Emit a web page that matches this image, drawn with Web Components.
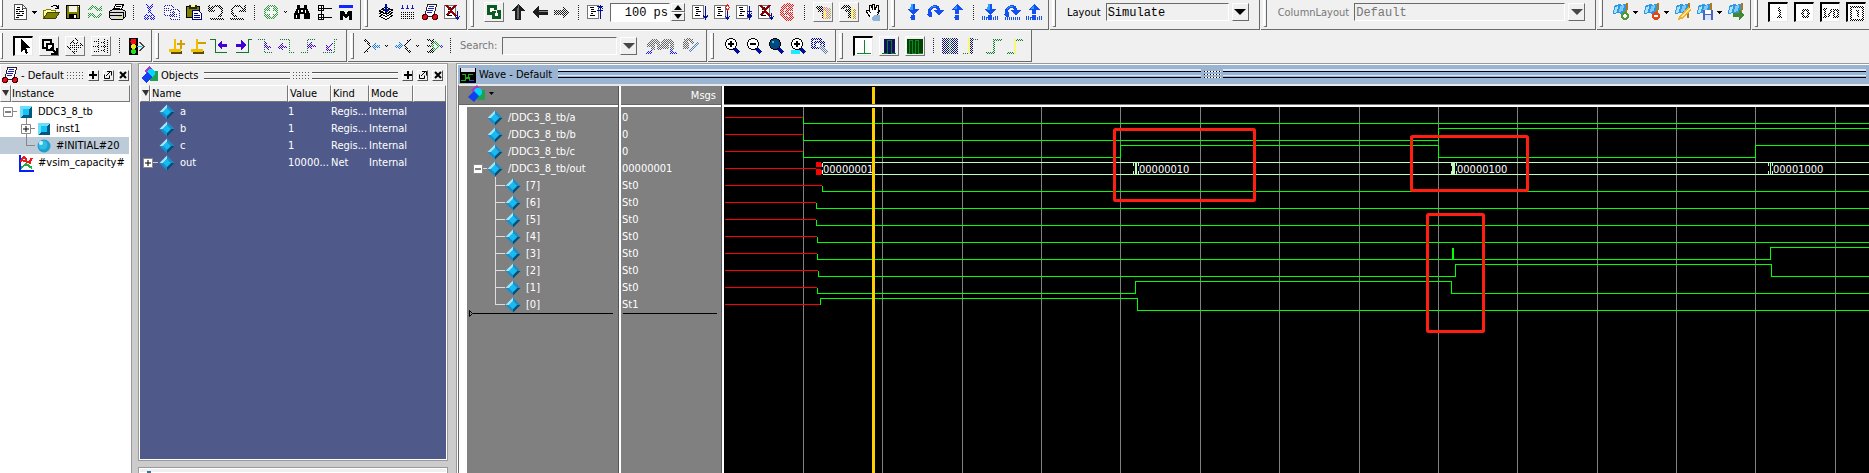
<!DOCTYPE html>
<html lang="en">
<head>
<meta charset="utf-8">
<title>Wave - Default</title>
<style>
html{height:100%}
body{margin:0;min-height:100%;display:flex;flex-direction:column;background:#f0f0f0;color:#000;font:11px/17px "DejaVu Sans Condensed","Noto Sans",sans-serif;overflow:hidden}
</style>
</head>
<body>
<sim-app></sim-app>
<script>
const R=(x,y,w,h,f)=>`<rect x="${x}" y="${y}" width="${w}" height="${h}" fill="${f}"/>`;
const P=(d,s='#000',w=1,f='none')=>`<path d="${d}" stroke="${s}" stroke-width="${w}" fill="${f}"/>`;
const F=(d,f='#000')=>`<path d="${d}" fill="${f}"/>`;
const NAVY='#00109a';
const page=R(1,2,12,14,'#777')+R(2,3,10,12,'#fff')+P('M4 4.5h4M5 6.5h3M5 8.5h5M5 10.5h2M4 12.5h5','#000');
const cross=P('M3 2L13 13M13 2L4 12','#8b0000',2);
const glass=P('M11 11L16 16',NAVY,3)+'<circle cx="8" cy="7" r="5.5" fill="#fff" stroke="#000"/>';
const blueDown=F('M7 1h4v5h4l-6 6-6-6h4z','#1450f0')+F('M7 1h2v6h-3z','#30a0ff')+F('M9 12a2.500 2.500 0 1 1 0 5 2.500 2.500 0 0 1 0-5','#1450f0');
const blueUp=F('M7 11h4V7h4L9 1 3 7h4z','#1450f0')+F('M9 2L5 6h4z','#30a0ff')+F('M9 12a2.500 2.500 0 1 1 0 5 2.500 2.500 0 0 1 0-5','#1450f0');
const blueOver=P('M3 9C5 2 12 2 13 8','#1450f0',3)+F('M7 7h11l-5 6z','#1450f0')+P('M4 6C6 3 8 3 10 4','#30a0ff')+F('M4 9a2.500 2.500 0 1 1 0 5 2.500 2.500 0 0 1 0-5','#1450f0');
const barDots=P('M1.500 13v4M3.500 13v4M5.500 14v3M12.500 14v3M14.500 13v4M16.500 13v4','#1450f0');
const flag=F('M2 3l5-2 3 1 5-2-1 10-5 1-3-1-5 1z','#2f98e0')+F('M3 4l3-1-1 6-3 1z','#a8e4ff')+F('M8 3l4-1-1 6-4 1z','#7cc8f8')+P('M15 0l-1 15','#b07818',2);
const wheels='<circle cx="4" cy="14" r="2.5" fill="#e01020" stroke="#500"/><circle cx="14" cy="14" r="2.5" fill="#e01020" stroke="#500"/>';
const ICONS={
caret:F('M-1 8h5l-2.5 3z'),
new:P('M3.500 1.500h8l4 4v11h-12z','#555',1,'#fff')+P('M11.500 1.500v4h4','#555')+P('M6 4.500h3M5 6.500h4M11 6.500h1M5 8.500h2M8 8.500h5M5 10.500h4M11 10.500h2M6 12.500h6M5 14.500h3','#000'),
open:P('M1.500 14.500v-7h2l1-1h4l1 1h4v2','#808000',1,'#ffff9a')+P('M1.500 15.500l4-6h12l-4 6z','#404000',1,'#808000')+P('M9 3.500h1l2-1h2l2 2M16.500 2v4M13 5.500h4'),
save:R(2,2,14,14,'#000')+R(3,3,12,12,'#808000')+R(5,3,8,6,'#f4f4e8')+R(5,11,8,5,'#000')+R(10,12,2,3,'#fff')+R(14,3,1,1,'#fff'),
refresh:P('M3 7C5 3 9 3 12 6M15 10C13 15 9 15 6 12','#2a9a3c',3)+F('M10 8h6V2zM8 10H2v6z','#2a9a3c'),
print:P('M5.500 7l2-5.500h8L13 7','#000',1,'#fff')+P('M1.500 8.500l3-2h10l3 2v5l-3 3h-11l-2-2z','#000',1,'#d8d8d8')+P('M2 9.500h13v6M2 12.500h12M8 3.500h5M7 5.500h5')+R(10,13,3,1,'#dddd00'),
cut:P('M6 1l4 9M12 1L7 10M6 11l-2 2v3h3v-4M10 11l3 2v3h-3l-1-4','#1010ff',2),
copy:P('M1.500 2.500h7l2 2v8h-9zM7.500 6.500h7l2 2v8h-9z','#2020a0',1,'#fff')+P('M3 5.500h4M3 7.500h4M9 9.500h4M9 11.500h5M9 13.500h5','#2020a0'),
paste:P('M1.500 3.500h13v11h-13z','#000',1,'#808000')+R(4,2,8,4,'#222')+R(6,2,4,2,'#ffff60')+P('M7.500 7.500h6l3 3v6h-9z','#00008b',1,'#fff')+P('M9 10.500h4M9 12.500h6M9 14.500h6','#00008b'),
undo:P('M2 2v6h6M3 7C7 1 15 2 15 8s-4 5-5 6M3 15.500h14','#000',2),
redo:P('M16 2v6h-6M15 7C11 1 3 2 3 8s4 5 5 6M1 15.500h14','#000',2),
add:'<circle cx="9" cy="9" r="7.500" fill="#2f9a3f"/>'+P('M9 4v10M4 9h10','#fff',3),
find:F('M4 2h3v3h4V2h3v3l3 6v5h-6v-5H7v5H1v-5l3-6z')+R(5,7,1,3,'#fff')+R(12,7,1,3,'#fff')+R(3,12,1,3,'#fff')+R(8,7,2,2,'#fff'),
boxes:P('M3.500 2.500h5v5h-5zM3.500 11.500h5v5h-5z','#000',1,'#fff')+P('M4 5h4M6 3v4M4 14h4M6 12v4M9 5.500h8M9 14.500h8M6.500 8v3'),
em:R(2,2,14,3,'#1226ff')+F('M3 8h4l2 4 2-4h4v9h-3v-5l-3 4-3-4v5H3z'),
layers:P('M2.500 13.500l6-4 7 3-6 4zM2.500 10.500l6-4 7 3-6 4zM2.500 8l6-4 7 3-6 4z','#000',1,'#fff')+P('M9 1v7',NAVY,2)+F('M5 6h8L9 10z',NAVY),
grid:P('M3.500 2v4M8.500 2v4M13.500 2v4M2 5.500h3M7 5.500h3M12 5.500h3','#1a1ac0')+[9,11,13,15].map(y=>`<path d="M2 ${y}.500h14" stroke="#000" stroke-dasharray="1 1"/>`).join(''),
script:P('M6.500 1.500h9l-1 5-2 7h-9l2-7z','#222',1,'#fff')+P('M8 3.500h5M7 5.500h6M6 7.500h6M6 9.500h5','#2020c0')+wheels,
kill:page+cross+P('M14.500 8v7M12 13l2.500 3 2.500-3',NAVY),
link:P('M3.500 3.500h7v7h-7z','#0b5a22',3,'#fff')+P('M8.500 8.500h6v6h-6z','#0b5a22',3,'#fff')+P('M6 7h5v4','#fff'),
up:F('M9 1l7 7h-4v9H6V8H2z','#1d1d1d')+F('M9 2l1 1v13H8V8z','#666'),
left:F('M1 9l7-6v4h9v5H8v3z','#1d1d1d')+R(8,8,9,1,'#888'),
right:F('M17 9l-7-6v4H1v5h9v3z','#1d1d1d'),
restart:page+P('M11 3.500h6M11 7.500h6M14.500 3v13M12 6l2.500-3 2.500 3',NAVY),
run:page+P('M14.500 3v12M12 12l2.500 4 2.500-4',NAVY),
runc:page+P('M14.500 8v8M12 13l2.500 3 2.500-3',NAVY)+P('M14.500 2l2 2.500-2 2.500-2-2.500z','#e02020',1,'#fff'),
runall:page+P('M14.500 3v12M12 8.500h5M12 12l2.500 4 2.500-4M12 10l2.500 3 2.500-3',NAVY),
stop:page+cross+P('M14.500 10v5M12 13l2.500 3 2.500-3',NAVY),
brk:P('M14 4C10 0 3 3 3 9s7 9 11 5M14 7c-7-4-9 6 0 4','#f01818',4),
prof:P('M2 4h5l3 3v8M4 7h5v8','#000',3)+R(9,4,5,12,'#f08080')+R(10,8,2,7,'#ffff00')+R(14,5,3,11,'#b0a060'),
prof2:P('M2 6c2-4 8-4 9 0v9M5 7h4v8','#000',3)+R(11,4,2,12,'#ffff00')+R(13,6,3,10,'#c09040'),
hand:F('M3 8l2-1 2 3-2-7 2-1 2 5V1h2v6l2-5 1 1-1 6 2-2 1 1-4 8H8z','#fff')+P('M6 14L2 8l2-1 2 2-1-6 2-1 2 5-1-6 2 0 1 6 2-5 2 1-1 6 2-2-3 6-3 3')+P('M8 15l3-3h4v5H9z','#8fb4d8',1,'#8fb4d8'),
bDown:blueDown,bOver:blueOver,bUp:blueUp,
bDown2:blueDown+barDots,bOver2:blueOver+P('M2.500 14v3M4.500 14v3M6.500 14v3M8.500 14v3M10.500 14v3M12.500 14v3M14.500 14v3M16.500 14v3','#1450f0'),bUp2:blueUp+barDots,
fAdd:flag+'<circle cx="13" cy="13" r="4" fill="#4f9a30"/>'+P('M13 11v4M11 13h4','#fff',2),
fDel:flag+'<circle cx="13" cy="13" r="4" fill="#e04818"/>'+P('M11 13h4','#fff',2),
fEdit:flag+F('M5 13L14 4l3 3-9 9-4 1z','#f0b030')+F('M7 13l8-8 1 1-8 9z','#ffe890'),
fSave:flag+R(7,7,10,10,'#4868c0')+R(9,7,6,4,'#fff')+R(9,12,6,5,'#d8e4ff'),
fGo:flag+F('M6 10h6V7l6 5-6 5v-3H6z','#3f8a30'),
ptr:F('M6 2v13l3-3 2 5 2-1-2-5h4z'),
zone:P('M3 3h8v8H3z','#000',2)+P('M7 7h6v6H7z','#000',2,'#fff')+P('M11 11l5 5M16.500 11v5.500H11','#000',2),
pan:P('M9 1l3 4h-2v3h4V6l3 3-3 3v-2h-4v4h2l-3 3-3-3h2v-4H4v2L1 9l3-3v2h4V5H6z','#000',1,'#fff'),
twoE:P('M1 4.500h5M1 9.500h5M1 14.500h5M6.500 2v14M12.500 2v14M8 5.500h4M8 9.500h7M8 13.500h4M15.500 2v14','#000',1),
light:R(2,1,9,17,'#000')+'<circle cx="6.5" cy="4.500" r="3" fill="#f01010"/><circle cx="6.5" cy="9.500" r="2.500" fill="#f0e020"/><circle cx="6.5" cy="14.500" r="2.500" fill="#20e020"/>'+P('M12 5.500h1l4 4-4 4h-1','#444')+R(10,9,5,1,'#00d0ff'),
cAdd:R(3,14,11,3,'#604800')+R(1,12,12,3,'#f0c000')+R(6,2,2,11,'#f0c000')+P('M9 7h8M13 3v9','#d0a000',2),
cDel:R(3,14,11,3,'#604800')+R(1,12,12,3,'#f0c000')+R(6,2,2,11,'#f0c000')+P('M8 6h8','#d0a000',2),
ePrev:P('M-2 2.500h5v13h12','#0b7a2a')+F('M5 8l5-5v4h5v3h-5v3z','#4000d8'),
eNext:P('M18 2.500h-4v13H2','#0b7a2a')+F('M12 8L7 3v4H2v3h5v3z','#4000d8'),
e1:P('M2 2.500h6v13h9','#0b7a2a')+P('M10 5v5h5M8 8l5 5','#4000d8',2),
e2:P('M2 2.500h9v13h6','#0b7a2a')+P('M5 7l-4 3 4 3M2 10h7','#4000d8',2),
e3:P('M15 2.500H7v13H1','#0b7a2a')+P('M12 6l-4 3 4 3M8 9h8','#4000d8',2),
e4:P('M16 2.500h-4v13H1','#0b7a2a')+P('M5 8v5h5M5 12l6-6','#4000d8',2),
w1:P('M1 3c5 0 4 6 7 6M1 15c5 0 4-6 7-6','#000',2)+F('M9 9l4-4v3h4v3h-4v3z','#1878e8'),
w2:P('M17 3c-5 0-4 6-7 6M17 15c-5 0-4-6-7-6','#000',2)+F('M9 9L5 5v3H1v3h4v3z','#1878e8'),
w3:P('M2 3h3l3 4M2 9h5M2 15h3l3-4M8 2v14','#000',2)+P('M10 5l4 4-4 4-3-4z','#20a030',2)+R(15,8,3,3,'#4020e0'),
s1:P('M5 10c0-8 10-8 10 0v3M9 6v7','#666',4)+F('M0 17l8-5v5z','#1818ff'),
s2:P('M1 12V8c0-6 9-6 9 0v5M5 6v6','#666',4)+F('M8 12l8 5H8z','#1818ff'),
s3:P('M2 12V7c0-6 9-6 9 0M5 5v7','#666',3)+P('M7 15l9-9','#5080c0',4),
zIn:glass+P('M8 4v6M5 7h6','#000',2),zOut:glass+P('M5 7h6','#000',2),
zFull:glass.replace('#fff','#004880')+R(5,4,2,2,'#30b8e8'),
zCur:R(2,13,9,4,'#20e8ff')+glass+P('M8 4v6M5 7h6','#000',2),
zLast:P('M1 2h9v9H1zM4 5h9v6H4z','#000090',2)+P('M9 9l7 7','#6080a8',3),
wa:P('M2 16.500h14M9.500 3v13','#0b8a2a'),wb:R(4,2,11,15,'#101060')+P('M2 16.500h5v-13h4v13h5','#0b7a2a'),
wc:R(1,2,16,15,'#004000')+P('M1 16.500h2v-13h3v13h3v-13h3v13h5','#0b8a2a'),
wd:R(1,1,16,16,'#14146a')+R(8,1,2,16,'#2a8a4a'),
we:R(5,1,5,16,'#14146a')+R(5,1,2,16,'#ffff00')+P('M0 16.500h6M10 2.500h5','#0b7a2a'),
wf:P('M1 16h7.500V3h8','#0b7a2a',2),wg:P('M0 16h7M8 3h8','#0b7a2a',2)+R(7,2,2,15,'#ffff00'),
pi:P('M8 6h2v7M7 13h5M8 4h2','#000',2),po:P('M7 6h5v7H7zM6 8v3M13 8v3','#000',2),
pio:P('M1 5h4M3 5v8M1 13h4M6 13l4-8M12 6h4v7h-4z','#000',2),
pint:P('M3 3h12v13H3zM8 7h2v6','#000',2),
gem:F('M9 1.500L1.500 9H5l4-4z','#9ce9ff')+F('M9 1.500L16.500 9H13L9 5z','#1c8cc8')+F('M16.500 9L9 16.500V13l4-4z','#004f78')+F('M1.500 9L9 16.500V13L5 9z','#1490d0')+F('M9 5l4 4-4 4-4-4z','#10bdf5'),
cube:F('M3 3h12v12H3z','#0090c8')+F('M3 15V3h12z','#6fdcf8')+F('M3 15h12V3z','#00597c')+R(6,6,6,6,'#10c4f8'),
ball:'<circle cx="9" cy="9" r="6.500" fill="#1c9fcc"/><circle cx="8" cy="8" r="4.500" fill="#30bce8"/><circle cx="6" cy="6" r="2" fill="#d0f4ff"/>',
chart:R(2,2,14,15,'#fff')+P('M2.500 1v16M2 16.500h15','#0020ff',2)+P('M4 8c2-6 4-6 5-2s3 3 6-2M4 6l10 3','#f01818',2)+P('M4 14l5-4 6 4','#20b040',2),
objs:F('M3 5l6-5 4 5-6 4z','#b030d0')+R(9,5,8,10,'#20a050')+'<circle cx="10" cy="7" r="4" fill="#00d8f8"/>'+F('M6 6l5 5-5 6-6-5z','#1040f0'),
wave:R(1,2,16,15,'#000')+R(2,2,14,4,'#dde')+P('M3 8.500h3v4h3v-4h5M2 14.500h4v-3h4v3h5','#18b018')+R(10,14,5,1,'#4040ff'),
figs:R(1,6,3,9,'#7ea0b8')+R(6,1,4,14,'#3d6f90')+R(12,5,3,9,'#7ea0b8')
};
const define=(tag,css,html)=>{
  const t=document.createElement('template');
  customElements.define(tag,class extends HTMLElement{
    constructor(){super();this.attachShadow({mode:'open'})}
    connectedCallback(){
      t.innerHTML=`<style>*{box-sizing:border-box}:host{box-sizing:border-box}${css}</style>${typeof html==='function'?html(this):html}`;
      this.shadowRoot.replaceChildren(t.content.cloneNode(true));
    }
  });
};
define('px-icon',':host{display:flex;flex:none;width:18px;height:18px}svg{width:18px;height:18px;overflow:visible}',el=>{
  const dim=el.hasAttribute('dim');
  return `<svg viewBox="0 0 18 18" aria-hidden="true" ${el.hasAttribute('soft')?'':'shape-rendering="crispEdges"'}>${dim?'<defs><pattern id="c" width="2" height="2" patternUnits="userSpaceOnUse"><rect width="1" height="1" fill="#fff"/><rect x="1" y="1" width="1" height="1" fill="#fff"/></pattern><mask id="m" maskUnits="userSpaceOnUse" x="-2" y="-2" width="22" height="22"><rect x="-2" y="-2" width="22" height="22" fill="url(#c)"/></mask></defs>':''}<g ${dim?'mask="url(#m)"':''}>${ICONS[el.getAttribute('name')]||''}</g></svg>`});
define('tool-button',`
:host{display:flex;flex:none;width:22px;justify-content:center;align-items:center}
:host([boxed]){width:26px}:host([narrow]){width:18px}:host([caret]){width:9px}
button{display:flex;align-items:center;justify-content:center;padding:0;border:0;background:none;width:20px;height:20px}
:host([narrow]) button{width:18px}
:host([caret]) button{width:5px;overflow:visible;justify-content:flex-start}
:host([boxed]) button{border:1px solid;border-color:#fff #777 #777 #fff}
:host([pressed]) button{background:#fff;border-width:2px 1px 1px 2px;border-color:#000 #e8e8e8 #e8e8e8 #000}`,
el=>`<button type="button" aria-label="${el.getAttribute('icon')}" ${el.hasAttribute('dim')?'disabled':''}><px-icon name="${el.getAttribute('icon')}" ${el.hasAttribute('dim')?'dim':''}></px-icon></button>`);
define('tool-group',`
:host{display:flex;align-items:stretch;flex:none;border-bottom:1px solid #6a6a6a;border-right:1px solid #6a6a6a;margin-right:1px;padding-right:4px;box-shadow:inset 0 1px #fff}
:host([top]){box-shadow:none;padding-right:3px}
:host([open]){border-right:0}
i{width:4px;margin:3px 7px 2px 2px;border-left:2px solid #fff;border-right:1px solid #6a6a6a;border-bottom:1px solid #6a6a6a;flex:none}
:host([first]) i{margin-left:0;width:3px}
:host([top]) i{margin-top:0}
:host([first][top]) i{margin-right:6px}
div{display:flex;align-items:center;flex:none}:host([top]) div{padding-bottom:5px}`,'<i></i><div><slot></slot></div>');
define('tool-sep',':host{display:block;width:11px;height:15px;padding:0 5px}i{display:block;height:15px;width:1px;background:repeating-linear-gradient(#222 0 1px,transparent 1px 2px)}','<i></i>');
define('tool-row',':host{display:flex;overflow:hidden;height:32px}:host([top]){height:30px}','<slot></slot>');
const arrow=`<svg width="12" height="6" aria-hidden="true"><path d="M0 0h12L6 6z"/></svg>`;
define('combo-box',`
:host{display:flex;align-items:center;flex:none;padding:0 4px 0 4px}
label{margin-right:5px;white-space:nowrap}
:host([off]){color:#777}
.f{display:grid;grid-template-columns:1fr 20px;height:18px}
select,input{grid-area:1/1/2/3;appearance:none;width:100%;height:18px;border:0;margin:0;padding:2px 20px 0 2px;background:none;color:inherit;opacity:1;font:12px "Liberation Mono","Courier New",monospace;border-radius:0}
.s{grid-area:1/1;margin-right:3px;border:1px solid;border-color:#6a6a6a #fff #fff #6a6a6a;pointer-events:none}
b{grid-area:1/2;display:flex;align-items:center;justify-content:center;margin-right:3px;border:1px solid;border-color:#fff #6a6a6a #6a6a6a #fff;pointer-events:none}
:host([off]) svg{opacity:.7}
.w142{width:146px}.w233{width:234px}.w136{width:138px}`,
el=>{const l=el.getAttribute('label'),v=el.getAttribute('value'),off=el.hasAttribute('off')?'disabled':'';
return `<label for="c">${l}</label><div class="f ${el.getAttribute('size')}">${el.hasAttribute('search')?`<input id="c" type="text" ${off}>`:`<select id="c" ${off}><option>${v}</option></select>`}<span class="s"></span><b>${arrow}</b></div>`});
define('time-box',`
:host{display:flex;align-items:center;margin:0 4px;flex:none}
input{width:60px;height:19px;padding:2px 1px 0 0;border:1px solid;border-color:#6a6a6a #fff #fff #6a6a6a;background:#fff;text-align:right;font:12px "Liberation Mono","Courier New",monospace;color:#000}
div{display:flex;flex-direction:column;width:15px;padding-left:1px}
button{height:9px;padding:0;border:1px solid;border-color:#fff #6a6a6a #6a6a6a #fff;background:none;display:flex;align-items:center;justify-content:center}`,
`<input value="100 ps" aria-label="Run length"><div><button type="button" aria-label="More"><svg width="8" height="5"><path d="M4 0l4 5H0z"/></svg></button><button type="button" aria-label="Less"><svg width="8" height="5"><path d="M4 5l4-5H0z"/></svg></button></div>`);
define('panel-title',`
:host{display:flex;align-items:center;height:20px;flex:none;overflow:hidden;padding:0 3px 0 1px;white-space:nowrap}
px-icon{margin-right:2px}
.l{flex:1;height:7px;margin-left:6px;border:1px solid #555;border-width:1px 0;box-shadow:0 1px #fff,inset 0 1px #fff}
.d{flex:none;width:17px;height:7px;margin-left:3px;background:repeating-linear-gradient(90deg,#555 0 1px,transparent 1px 3px);-webkit-mask:repeating-linear-gradient(#000 0 1px,transparent 1px 3px);mask:repeating-linear-gradient(#000 0 1px,transparent 1px 3px)}
.l+.d+.l{margin-left:2px}
.b{display:flex;gap:4px;margin-left:4px}
button{width:11px;height:11px;padding:0;border:1px solid;border-color:#fff #555 #555 #fff;background:none;display:flex;align-items:center;justify-content:center}
:host([short]) .l{display:none}
:host([blue]){background:#9ab4d2;height:19px}
:host([blue]) .l{border-color:#001;height:7px;box-shadow:0 -2px #d4ecfc,inset 0 3px #9ab4d2,inset 0 4px #d4ecfc}
:host([blue]) .d{background:repeating-linear-gradient(90deg,#001 0 1px,#fff 1px 3px)}`,
el=>`<px-icon name="${el.getAttribute('icon')}"></px-icon><span>${el.getAttribute('text')||''}</span><i class="l"></i><i class="d"></i><i class="l"></i>${el.hasAttribute('blue')?'':`<div class="b"><button type="button" aria-label="Zoom"><svg width="8" height="8"><path d="M4 0v8M0 4h8" stroke="#000" stroke-width="2"/></svg></button><button type="button" aria-label="Undock"><svg width="8" height="8"><path d="M.5 3.500v4h5v-3M2 5l4-4M3 .5h4.500v4" stroke="#000" fill="none"/></svg></button><button type="button" aria-label="Close"><svg width="8" height="8"><path d="M1 1l6 6M7 1L1 7" stroke="#000" stroke-width="2"/></svg></button></div>`}`);
define('panel-frame',`:host{display:flex;flex-direction:column;min-width:0;min-height:0;background:#f0f0f0;border:1px solid #999;box-shadow:inset 0 0 0 1px #fff;padding:1px;overflow:hidden}`,'<slot></slot>');
const box=p=>`<svg class="x" width="10" height="10" aria-hidden="true"><path d="M.5.5h9v9h-9z" fill="#fff" stroke="#888"/><path d="M2 5h6${p?'M5 2v6':''}" stroke="#000" fill="none"/></svg>`;
const head='border:1px solid;border-color:#fff #777 #777 #fff;';
define('instance-tree',`
:host{display:flex;flex-direction:column;flex:1;background:#fff}
header{display:flex;height:17px;background:#f0f0f0;line-height:15px}
header span{${head}}header span:first-child{display:flex;width:11px;padding:4px 1px}header span:last-child{flex:1}
ul{list-style:none;margin:0;padding:1px 0 0}
li{display:flex;align-items:center;height:17px;white-space:nowrap;gap:3px}
li.n{padding-left:3px;gap:0}li.m{padding-left:21px;gap:0}li.k{padding-left:35px;background:#bdcbd8;margin-right:1px}li.v{padding-left:17px}
.h{width:4px;border-top:1px solid #888}.n span,.m span{margin-left:3px}.x{flex:none}
.n{background:linear-gradient(#888,#888) 26px 15px/1px 2px no-repeat}
.m{background:linear-gradient(#888,#888) 26px 0/1px 17px no-repeat}
.k{background:linear-gradient(#888,#888) 26px 0/1px 9px no-repeat,linear-gradient(#888,#888) 26px 8px/9px 1px no-repeat,#bdcbd8!important}`,
`<header><span><svg width="8" height="7"><path d="M0 0h7L4 6z" fill="#333"/></svg></span><span>Instance</span></header>
<ul><li class="n">${box(0)}<i class="h"></i><px-icon name="cube"></px-icon><span>DDC3_8_tb</span></li>
<li class="m">${box(1)}<i class="h"></i><px-icon name="cube"></px-icon><span>inst1</span></li>
<li class="k"><px-icon name="ball" soft></px-icon><span>#INITIAL#20</span></li>
<li class="v"><px-icon name="chart"></px-icon><span>#vsim_capacity#</span></li></ul>`);
define('objects-table',`
:host{display:block;flex:1;background:#505a8a;color:#fff;min-height:0}
table{width:100%;border-spacing:0;table-layout:fixed}
th{${head}background:#f0f0f0;color:#000;font-weight:normal;text-align:left;height:17px;line-height:15px;padding:0 1px}
th svg{display:block}
td{height:17px;padding:0;white-space:nowrap}
.c{display:flex;align-items:center;height:17px;gap:4px;padding-left:8px}
.o{padding-left:0;margin-left:-7px;gap:0}.o span{margin-left:4px}.o i{width:5px;border-top:1px solid #ccc}
tbody:before{content:"";display:block;height:1px}
.x{flex:none}`,
`<table><colgroup><col style="width:10px"><col><col style="width:43px"><col style="width:38px"><col style="width:44px"><col style="width:33px"></colgroup>
<thead><tr><th><svg width="7" height="7"><path d="M0 0h7L4 6z" fill="#333"/></svg></th><th>Name</th><th>Value</th><th>Kind</th><th>Mode</th><th></th></tr></thead><tbody>
${['a','b','c'].map(n=>`<tr><td></td><td><div class="c"><px-icon name="gem" soft></px-icon><span>${n}</span></div></td><td>1</td><td>Regis...</td><td>Internal</td><td></td></tr>`).join('')}
<tr><td></td><td><div class="c o">${box(1)}<i></i><px-icon name="gem" soft></px-icon><span>out</span></div></td><td>10000...</td><td>Net</td><td>Internal</td><td></td></tr></tbody></table>`);
define('wave-names',`
:host{display:flex;flex-direction:column;width:160px;flex:none;background:#808080;color:#fff;border-right:1px solid #555}
header{display:flex;align-items:center;height:21px;padding:0 9px 3px;border-bottom:2px solid #fff;box-shadow:inset 0 -1px #666;flex:none}
section{flex:1;border-left:8px solid #fff}
ul{list-style:none;margin:0;padding:2px 0 0}
li{display:flex;align-items:center;height:17px;padding-left:19px;gap:4px;white-space:nowrap}
.p{padding-left:6px;gap:0}.p i{width:4px;border-top:1px solid #ddd;margin-right:-1px}.p span{margin-left:4px}
.b{padding-left:37px;background:linear-gradient(#ddd,#ddd) 28px 0/1px 17px no-repeat,linear-gradient(#ddd,#ddd) 28px 8px/10px 1px no-repeat}
.b:last-child{background-size:1px 9px,10px 1px}.x{flex:none}
.e{display:flex;align-items:center;margin:-3px 5px 0 2px}.e hr{flex:1;margin:0;border:0;border-top:1px solid #000}`,
`<header><px-icon name="objs" soft></px-icon><svg width="10" height="4" aria-label="Menu"><path d="M3 0h5L5.500 3z" fill="#000"/></svg></header>
<section><ul>${['a','b','c'].map(n=>`<li><px-icon name="gem" soft></px-icon><span>/DDC3_8_tb/${n}</span></li>`).join('')}
<li class="p">${box(0)}<i></i><px-icon name="gem" soft></px-icon><span>/DDC3_8_tb/out</span></li>
${[7,6,5,4,3,2,1,0].map(n=>`<li class="b"><px-icon name="gem" soft></px-icon><span>[${n}]</span></li>`).join('')}</ul>
<div class="e"><svg width="4" height="7"><path d="M.5.500v6L3.500 3.500z" fill="none" stroke="#000"/></svg><hr></div></section>`);
define('wave-values',`
:host{display:flex;flex-direction:column;width:103px;flex:none;background:#808080;color:#fff;border-left:2px solid #fff;border-right:1px solid #555}
header{height:21px;text-align:right;padding:1px 5px 0;border-bottom:2px solid #fff;box-shadow:inset 0 -1px #666;flex:none}
ul{list-style:none;margin:0;padding:2px 0 0 1px}li{height:17px}
hr{margin:0 4px 0 2px;border:0;border-top:1px solid #000}`,
`<header>Msgs</header><ul>${['0','0','0','00000001','St0','St0','St0','St0','St0','St0','St0','St1'].map(v=>`<li>${v}</li>`).join('')}</ul><hr>`);
const END=3000;
const trace=(row,t0,edges)=>{
  const c=10.5+17*row,y=l=>l?c-6:c+6;
  let d=`M${t0+.5} ${c}V${y(edges[0])}`;
  for(let i=1;i<edges.length;i+=2)d+=`H${edges[i]+.5}V${y(edges[i+1])}`;
  return `<path d="M1 ${c}H${t0}" stroke="#f00"/><path d="${d}H${END}" stroke="#0f0"/>`;
};
define('wave-canvas',`
:host{display:flex;flex-direction:column;flex:1;min-width:0;background:#000;border-left:2px solid #fff}
header{height:21px;flex:none;border-bottom:2px solid #fff;box-shadow:inset 0 -1px #777;padding:1px 0 1px 148px}
header i{display:block;width:3px;height:17px;background:#ffd000}
svg{display:block;flex:1;width:100%;min-height:0;font:11px "DejaVu Sans Condensed","Noto Sans",sans-serif;overflow:hidden}`,()=>{
  let g='';for(let i=0;i<38;i++){g+=`M${Math.round(79+i*79.36)+.5} 0V3000`}
  const bus=(x,w,t)=>`<path d="M${x-1.500} 55v4M${x+.5} 55v13M${x+w+.5} 55v13M${x+w+2.500} 55v4M${x-1.500} 64v4M${x+w+2.500} 64v4" stroke="#bfb" shape-rendering="crispEdges"/><text x="${x+w+3}" y="66" fill="#fff">${t}</text>`;
  return `<header><i></i></header><svg role="img" aria-label="Waveforms"><g fill="none" shape-rendering="crispEdges"><path d="${g}" stroke="#808080"/>
${trace(0,79,[0])}${trace(1,79,[0,714,1])}${trace(2,79,[0,396,1,714,0,1031,1])}
<path d="M1 61.500H92" stroke="#f00"/><path d="M92 55h5v5h-5zM92 62h5v6h-5zM97 57h2v3h-2zM97 63h2v4h-2z" fill="#f00"/><path d="M99 55.500H${END}M99 67.500H${END}M98.500 56v4M98.500 63v4" stroke="#bfb"/>
${trace(4,98,[0])}${trace(5,92,[0])}${trace(6,92,[0])}${trace(7,93,[0])}${trace(8,93,[0,1046,1])}${trace(9,94,[0,731,1,1047,0])}${trace(10,93,[0,411,1,727,0])}${trace(11,96,[1,413,0])}
<path d="M728 141h2v12h-2z" fill="#0f0"/><path d="M728 56h3v11h-3z" fill="#bfb"/></g>
<text x="99" y="66" fill="#fff">00000001</text>${bus(411,1,'00000010')}${bus(729,1,'00000100')}${bus(1046,0,'00001000')}
<path d="M148 1h3v3000h-3z" fill="#ffd000"/>
<g fill="none" stroke="#ff1f10" stroke-width="3"><rect x="390.500" y="22.500" width="140" height="71" rx="1"/><rect x="687.500" y="29.500" width="116" height="54" rx="1"/><rect x="703.500" y="107.500" width="56" height="117" rx="1"/></g></svg>`});
const tb=(s)=>s.split(' ').map(k=>{
  if(k==='|')return '<tool-sep></tool-sep>';
  let a='';if(k[0]==='v'&&k.length<=2)return `<tool-button caret icon="caret" ${k==='v.'?'dim':''}></tool-button>`;
  for(;'.#!~'.includes(k[0]);k=k.slice(1))a+={'.':' dim','#':' boxed','!':' pressed','~':' narrow'}[k[0]];
  return `<tool-button icon="${k}"${a}></tool-button>`}).join('');
define('sim-app',`
:host{display:flex;flex-direction:column;height:100vh}
main{display:flex;flex:1;min-height:0;background:#ccc;border-top:1px solid #f0f0f0}
.left{width:132px;flex:none;border-left:0;padding-left:0;border-bottom:0;padding-bottom:0}
.mid{display:flex;flex-direction:column;width:310px;margin:0 8px 0 6px;gap:6px;flex:none;min-height:0}
.mid>:first-child{flex:1}.mid>:last-child{height:6px;flex:none;border-bottom:0}
.wave{flex:1;border-right:0;padding-right:0;border-bottom:0;padding-bottom:0}
.w{display:flex;flex:1;min-height:0;border-top:2px solid #e8e8e8;border-left:1px solid #666}`,
`<tool-row top><tool-group top first>${tb('new v open save .refresh print | .cut .copy paste .undo .redo | .add v. find boxes em')}</tool-group>
<tool-group top>${tb('layers grid script kill')}</tool-group>
<tool-group top>${tb('#link up left .right | restart')}<time-box></time-box>${tb('run runc runall stop .brk | #.prof #.prof2 hand')}</tool-group>
<tool-group top>${tb('bDown bOver bUp | bDown2 bOver2 bUp2')}</tool-group>
<tool-group top><combo-box label="Layout" value="Simulate" size="w142"></combo-box></tool-group>
<tool-group top><combo-box off label="ColumnLayout" value="Default" size="w233"></combo-box></tool-group>
<tool-group top>${tb('fAdd v fDel v fEdit fSave v fGo')}</tool-group>
<tool-group top open style="flex:1 0 auto">${tb('#!.pi #!.po #!.pio #!.pint #.none')}</tool-group></tool-row>
<tool-row><tool-group first>${tb('#!ptr #zone #.pan #.twoE | light')}</tool-group>
<tool-group>${tb('cAdd cDel ePrev eNext .e1 .e2 .e3 .e4')}</tool-group>
<tool-group>${tb('.w1 v. .w2 v. .w3 |')}<combo-box off search label="Search:" size="w136"></combo-box>${tb('~.s1 ~.s2 .s3')}</tool-group>
<tool-group>${tb('zIn zOut zFull zCur .zLast')}</tool-group>
<tool-group>${tb('#!wa #wb #wc | .wd .we .wf .wg')}</tool-group></tool-row>
<main><panel-frame class="left"><panel-title short icon="script" text="- Default"></panel-title><instance-tree></instance-tree></panel-frame>
<div class="mid"><panel-frame><panel-title icon="objs" text="Objects"></panel-title><objects-table></objects-table></panel-frame>
<panel-frame><panel-title icon="figs"></panel-title></panel-frame></div>
<panel-frame class="wave"><panel-title blue icon="wave" text="Wave - Default"></panel-title><div class="w"><wave-names></wave-names><wave-values></wave-values><wave-canvas></wave-canvas></div></panel-frame></main>`);
</script>
</body>
</html>
